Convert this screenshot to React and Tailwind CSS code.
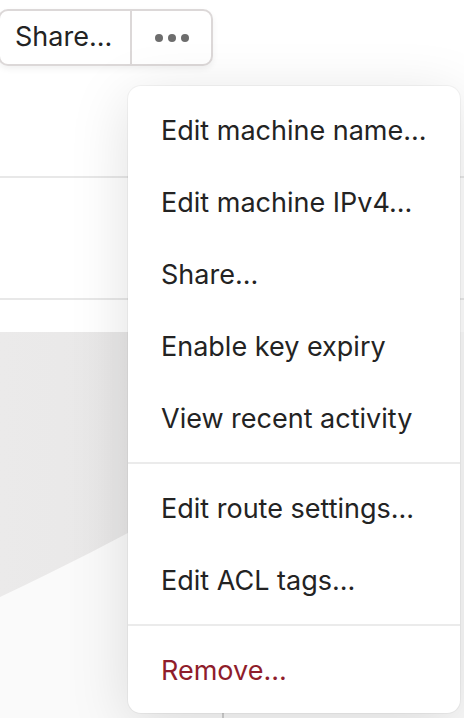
const groups = [
  ["Edit machine name...", "Edit machine IPv4...", "Share...", "Enable key expiry", "View recent activity"],
  ["Edit route settings...", "Edit ACL tags..."],
];

function MenuItem({ label, danger = false }) {
  return (
    <div
      className={`h-[72px] flex items-center pl-[33px] pr-4 text-[27px] cursor-default ${
        danger ? "text-[#8f1d2b]" : "text-[#232323]"
      }`}
    >
      {label}
    </div>
  );
}

function Separator() {
  return <div className="mt-[7px] mb-[9px] h-[2px] bg-[#ebebeb]" />;
}

export default function App() {
  return (
    <div
      className="relative w-[464px] h-[718px] overflow-hidden bg-white"
      style={{ fontFamily: "Inter, 'Noto Sans', sans-serif" }}
    >
      {/* page underneath the menu */}
      <div className="flex flex-col h-full">
        <div className="pt-[9px] flex">
          <div className="-ml-[2px] flex h-[57px] rounded-[10px] border-2 border-[#dcd8d8] bg-white shadow-[0_3px_6px_rgba(0,0,0,0.06)]">
            <button className="w-[130px] pl-[15px] text-left text-[27px] text-[#232323]">Share...</button>
            <div className="w-[2px] bg-[#dcd8d8]" />
            <button className="w-[79px] flex items-center justify-center text-[#6d6d6d]">
              <svg width="40" height="10" viewBox="0 0 40 10">
                <circle cx="7" cy="5" r="4" fill="currentColor" />
                <circle cx="20" cy="5" r="4" fill="currentColor" />
                <circle cx="33" cy="5" r="4" fill="currentColor" />
              </svg>
            </button>
          </div>
        </div>
        <div className="mt-[110px] h-[2px] bg-[#e8e8e8]" />
        <div className="h-[120px]" />
        <div className="h-[2px] bg-[#e8e8e8]" />
        <div className="h-[32px]" />
        <div className="flex-1 relative bg-[#fafafa]">
          <svg className="absolute inset-0" width="464" height="386" viewBox="0 0 464 386">
            <defs>
              <linearGradient id="g" x1="0" y1="0" x2="1" y2="0">
                <stop offset="0" stopColor="#ebeaea" />
                <stop offset="1" stopColor="#e4e3e3" />
              </linearGradient>
            </defs>
            <path d="M0 0 H420 C 330 90 190 175 0 265 Z" fill="url(#g)" />
          </svg>
          <div className="absolute left-[222px] bottom-0 h-[8px] w-[2px] bg-[#d0d0d0]" />
        </div>
      </div>

      {/* dropdown menu */}
      <div className="absolute left-[128px] top-[86px] w-[332px] rounded-[13px] bg-white pt-[9px] pb-[6px] shadow-[0_0_0_1px_rgba(0,0,0,0.04),0_12px_60px_rgba(0,0,0,0.13)]">
        {groups[0].map((l) => (
          <MenuItem key={l} label={l} />
        ))}
        <Separator />
        {groups[1].map((l) => (
          <MenuItem key={l} label={l} />
        ))}
        <Separator />
        <MenuItem label="Remove..." danger />
      </div>
    </div>
  );
}
